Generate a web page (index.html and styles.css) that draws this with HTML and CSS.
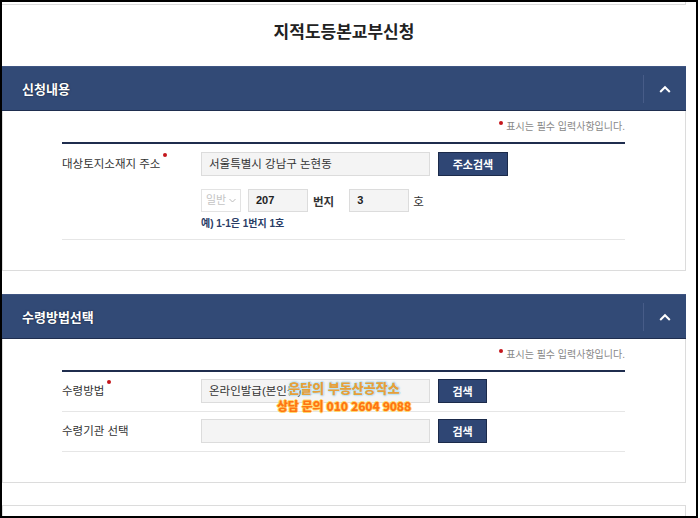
FILE: index.html
```html
<!DOCTYPE html>
<html lang="ko">
<head>
<meta charset="utf-8">
<title>지적도등본교부신청</title>
<link rel="stylesheet" href="styles.css">
</head>
<body>
<div class="frame">
  <div class="column">
    <div class="stub"></div>
    <h1 class="title">지적도등본교부신청</h1>

    <section class="panel">
      <div class="panel-head">
        <h2>신청내용</h2>
        <button class="toggle" type="button" aria-label="접기">
          <svg width="12" height="8" viewBox="0 0 12 8"><polyline points="1.2,7 6,2.2 10.8,7" fill="none" stroke="#fff" stroke-width="2"/></svg>
        </button>
      </div>
      <div class="panel-body">
        <p class="req-note"><span class="dot"></span>표시는 필수 입력사항입니다.</p>
        <div class="form">
          <div class="row">
            <div class="label">대상토지소재지 주소<span class="dot"></span></div>
            <div class="field">
              <div class="line">
                <div class="input wide">서울특별시 강남구 논현동</div>
                <button class="btn btn-addr" type="button">주소검색</button>
              </div>
              <div class="line second">
                <div class="select">일반 <svg width="7" height="5" viewBox="0 0 7 5"><polyline points="0.5,1 3.5,4 6.5,1" fill="none" stroke="#bbb" stroke-width="1"/></svg></div>
                <div class="input num">207</div>
                <span class="unit unit-bunji">번지</span>
                <div class="input num">3</div>
                <span class="unit unit-ho">호</span>
              </div>
              <p class="hint">예) 1-1은 1번지 1호</p>
            </div>
          </div>
        </div>
      </div>
    </section>

    <section class="panel">
      <div class="panel-head">
        <h2>수령방법선택</h2>
        <button class="toggle" type="button" aria-label="접기">
          <svg width="12" height="8" viewBox="0 0 12 8"><polyline points="1.2,7 6,2.2 10.8,7" fill="none" stroke="#fff" stroke-width="2"/></svg>
        </button>
      </div>
      <div class="panel-body">
        <p class="req-note"><span class="dot"></span>표시는 필수 입력사항입니다.</p>
        <div class="form">
          <div class="row simple">
            <div class="label">수령방법<span class="dot"></span></div>
            <div class="field">
              <div class="line">
                <div class="input wide">온라인발급(본인용)</div>
                <button class="btn btn-search" type="button">검색</button>
              </div>
            </div>
          </div>
          <div class="row simple">
            <div class="label">수령기관 선택</div>
            <div class="field">
              <div class="line">
                <div class="input wide"></div>
                <button class="btn btn-search" type="button">검색</button>
              </div>
            </div>
          </div>
        </div>
      </div>
    </section>

    <div class="panel-next"></div>
  </div>

  <div class="watermark">
    <div class="wm-1">운달의 부동산공작소</div>
    <div class="wm-2">상담 문의 010 2604 9088</div>
  </div>
</div>
</body>
</html>
```

FILE: styles.css
```css
* { box-sizing: border-box; }
html, body { margin: 0; padding: 0; background: #fff; }
body {
  font-family: "Liberation Sans", "Noto Sans CJK KR", sans-serif;
  color: #333;
}
.frame {
  position: relative;
  width: 698px;
  height: 518px;
  border: 2px solid #000;
  overflow: hidden;
  background: #fff;
}
.column { width: 684px; }
.stub {
  height: 3px;
  border-bottom: 1px solid #dcdcdc;
  border-right: 1px solid #dcdcdc;
}
.title {
  margin: 0;
  height: 61px;
  padding-top: 13px;
  font-size: 17px;
  line-height: 26px;
  font-weight: bold;
  text-align: center;
  color: #222;
  font-family: "Noto Sans CJK KR", sans-serif;
}
.panel-head {
  display: flex;
  align-items: center;
  height: 45px;
  background: #324a76;
  border-top: 1px solid #3f5582;
  border-bottom: 1px solid #1f2e4f;
}
.panel-head h2 {
  flex: 1;
  margin: 0;
  padding-left: 20px;
  font-size: 13px;
  font-weight: bold;
  color: #fff;
  font-family: "Noto Sans CJK KR", sans-serif;
  text-shadow: 0 0 2px rgba(0,0,0,0.6);
}
.toggle {
  width: 43px;
  height: 28px;
  padding: 0;
  margin: 0;
  border: 0;
  border-left: 1px solid #475c88;
  background: transparent;
  display: flex;
  align-items: center;
  justify-content: center;
}
.panel-body {
  border: 1px solid #dcdcdc;
  border-top: 0;
  padding: 0 60px 30px 59px;
}
.req-note {
  margin: 0;
  height: 31px;
  padding-top: 8px;
  line-height: 16px;
  font-size: 10px;
  color: #888;
  text-align: right;
}
.dot {
  display: inline-block;
  width: 4px;
  height: 4px;
  border-radius: 50%;
  background: #c4161c;
  vertical-align: top;
}
.req-note .dot { margin: 2px 3px 0 0; }
.label .dot { margin: 1px 0 0 3px; }
.form { border-top: 2px solid #1f2d4e; }
.row {
  display: flex;
  padding: 8px 0;
  border-bottom: 1px solid #e6e6e6;
}
.row.simple { padding: 7px 0 8px; }
.label {
  width: 139px;
  font-size: 11.5px;
  line-height: 24px;
  color: #333;
}
.field { flex: 1; }
.line { display: flex; align-items: center; }
.line.second { margin-top: 13px; }
.input {
  height: 24px;
  border: 1px solid #dcdcdc;
  background: #f4f4f4;
  font-size: 11.5px;
  line-height: 22px;
  padding: 0 7px;
  color: #333;
  white-space: nowrap;
  overflow: hidden;
}
.input.wide { width: 229px; }
.input.num {
  width: 60px;
  height: 23px;
  line-height: 21px;
  font-size: 11px;
  font-weight: bold;
  color: #222;
}
.select {
  width: 40px;
  height: 23px;
  border: 1px solid #e3e3e3;
  background: #fff;
  color: #c4c4c4;
  font-size: 11px;
  line-height: 21px;
  padding-left: 4px;
  margin-right: 7px;
  display: flex;
  align-items: center;
  gap: 3px;
}
.unit {
  font-size: 11.5px;
  font-weight: bold;
  color: #333;
}
.unit-bunji { margin: 0 15px 0 5px; }
.unit-ho { margin-left: 4px; font-weight: normal; }
.hint {
  margin: 5px 0 0;
  font-size: 10px;
  line-height: 14px;
  font-weight: bold;
  color: #2a3d66;
}
.btn {
  height: 24px;
  margin-left: 8px;
  padding: 0;
  border: 1px solid #1b2a4a;
  background: #2f4674;
  color: #fff;
  font-family: "Noto Sans CJK KR", sans-serif;
  font-size: 11px;
  font-weight: bold;
}
.btn-addr { width: 70px; }
.btn-search { width: 49px; }
.panel + .panel { margin-top: 23px; }
.panel-next {
  margin-top: 22px;
  height: 30px;
  border: 1px solid #dcdcdc;
}
.watermark {
  position: absolute;
  left: 0;
  top: 377px;
  width: 684px;
  text-align: center;
  font-family: "Noto Sans CJK KR", sans-serif;
  font-weight: 900;
  font-size: 13px;
  line-height: 18px;
}
.wm-1 {
  color: #e6a03a;
  text-shadow: 1px 0 0 #bfe4f6, -1px 0 0 #bfe4f6, 0 1px 0 #bfe4f6, 0 -1px 0 #bfe4f6, 0 0 3px #9fd2ee;
}
.wm-2 {
  font-size: 12px;
  letter-spacing: -0.2px;
  color: #ff7512;
  text-shadow: 1px 0 0 #ffd86e, -1px 0 0 #ffd86e, 0 1px 0 #ffd86e, 0 -1px 0 #ffd86e;
}
```
